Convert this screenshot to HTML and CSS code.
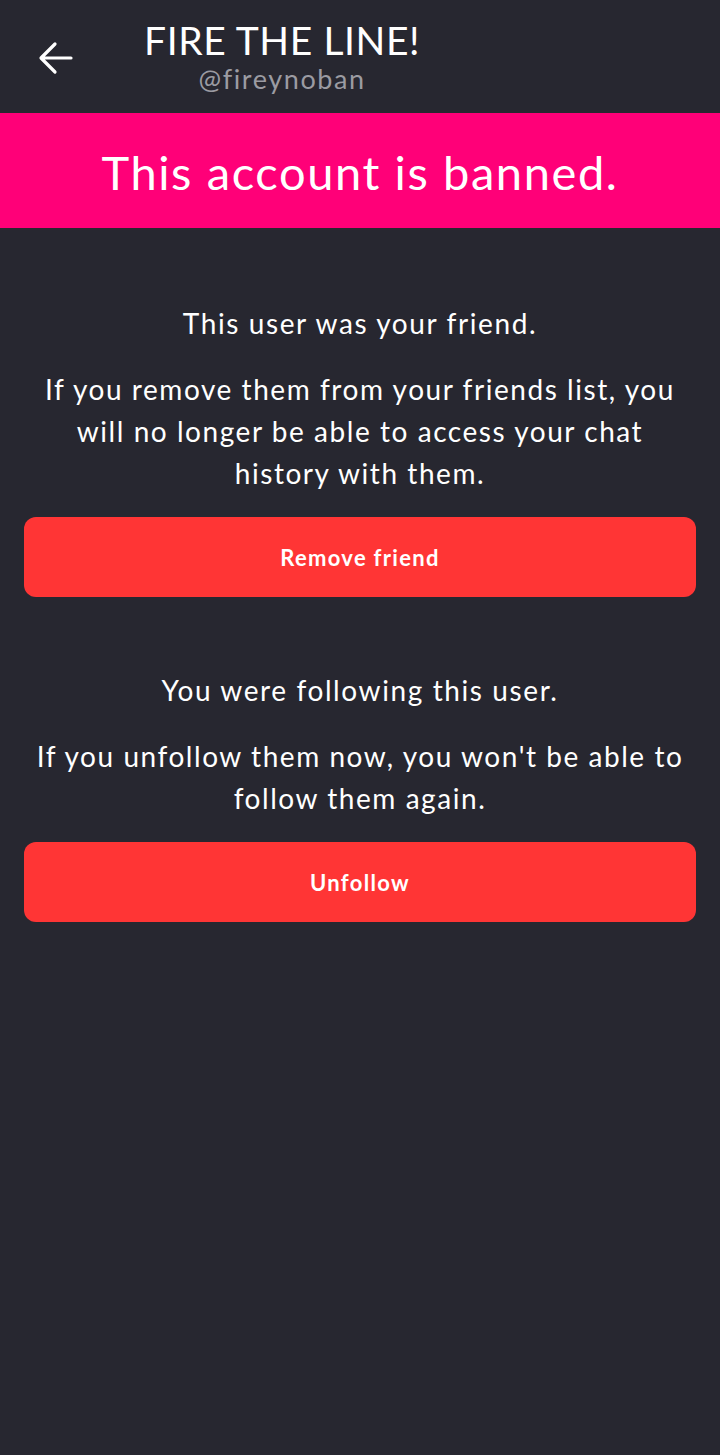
FILE: index.html
```html
<!DOCTYPE html>
<html>
<head>
<meta charset="utf-8">
<link rel="stylesheet" href="styles.css">
</head>
<body>
<header class="topbar">
  <button class="back" aria-label="Back">
    <svg width="36" height="36" viewBox="0 0 36 36"><path d="M34 18H5M18 4L4 18l14 14" fill="none" stroke="#fff" stroke-width="3.2" stroke-linecap="round" stroke-linejoin="round"/></svg>
  </button>
  <div class="titles">
    <div class="title">FIRE THE LINE!</div>
    <div class="handle">@fireynoban</div>
  </div>
</header>
<div class="banner">This account is banned.</div>
<main class="content">
  <section class="block">
    <p class="lead">This user was your friend.</p>
    <p class="desc">If you remove them from your friends list, you will no longer be able to access your chat history with them.</p>
    <button class="action">Remove friend</button>
  </section>
  <section class="block">
    <p class="lead">You were following this user.</p>
    <p class="desc">If you unfollow them now, you won't be able to follow them again.</p>
    <button class="action">Unfollow</button>
  </section>
</main>
</body>
</html>
```
FILE: styles.css
```css
* { box-sizing: border-box; }
html, body { margin: 0; padding: 0; }
body {
  background: #272730;
  color: #fff;
  font-family: Lato, "Noto Sans", sans-serif;
  min-height: 1455px;
}
.topbar {
  height: 113px;
  display: flex;
  align-items: flex-start;
  padding-left: 37px;
}
.back {
  background: none;
  border: 0;
  padding: 0;
  margin-top: 40px;
  width: 36px;
  height: 36px;
  display: flex;
}
.titles {
  margin-left: 71px;
  display: flex;
  flex-direction: column;
  align-items: center;
  padding-top: 17px;
}
.title {
  font-size: 39px;
  line-height: 46px;
  letter-spacing: 0.6px;
  color: #fff;
}
.handle {
  font-size: 27px;
  line-height: 32px;
  color: #9b9ba2;
  letter-spacing: 1.6px;
}
.banner {
  background: #ff0078;
  height: 115px;
  display: flex;
  align-items: center;
  justify-content: center;
  font-size: 47px;
  letter-spacing: 1.6px;
  padding-top: 2px;
}
.content {
  padding: 74px 24px 0;
  display: flex;
  flex-direction: column;
  gap: 72px;
}
.block {
  display: flex;
  flex-direction: column;
  align-items: stretch;
  text-align: center;
}
.lead {
  margin: 0;
  font-size: 28px;
  line-height: 42px;
  letter-spacing: 1.6px;
}
.desc {
  margin: 24px 0 0;
  font-size: 28px;
  line-height: 42px;
  letter-spacing: 1.55px;
  padding: 0 10px;
}
.action {
  margin-top: 23px;
  height: 80px;
  border: 0;
  border-radius: 12px;
  background: #ff3535;
  color: #fff;
  font-family: Lato, "Noto Sans", sans-serif;
  font-weight: bold;
  font-size: 22px;
  letter-spacing: 1.3px;
}
```
